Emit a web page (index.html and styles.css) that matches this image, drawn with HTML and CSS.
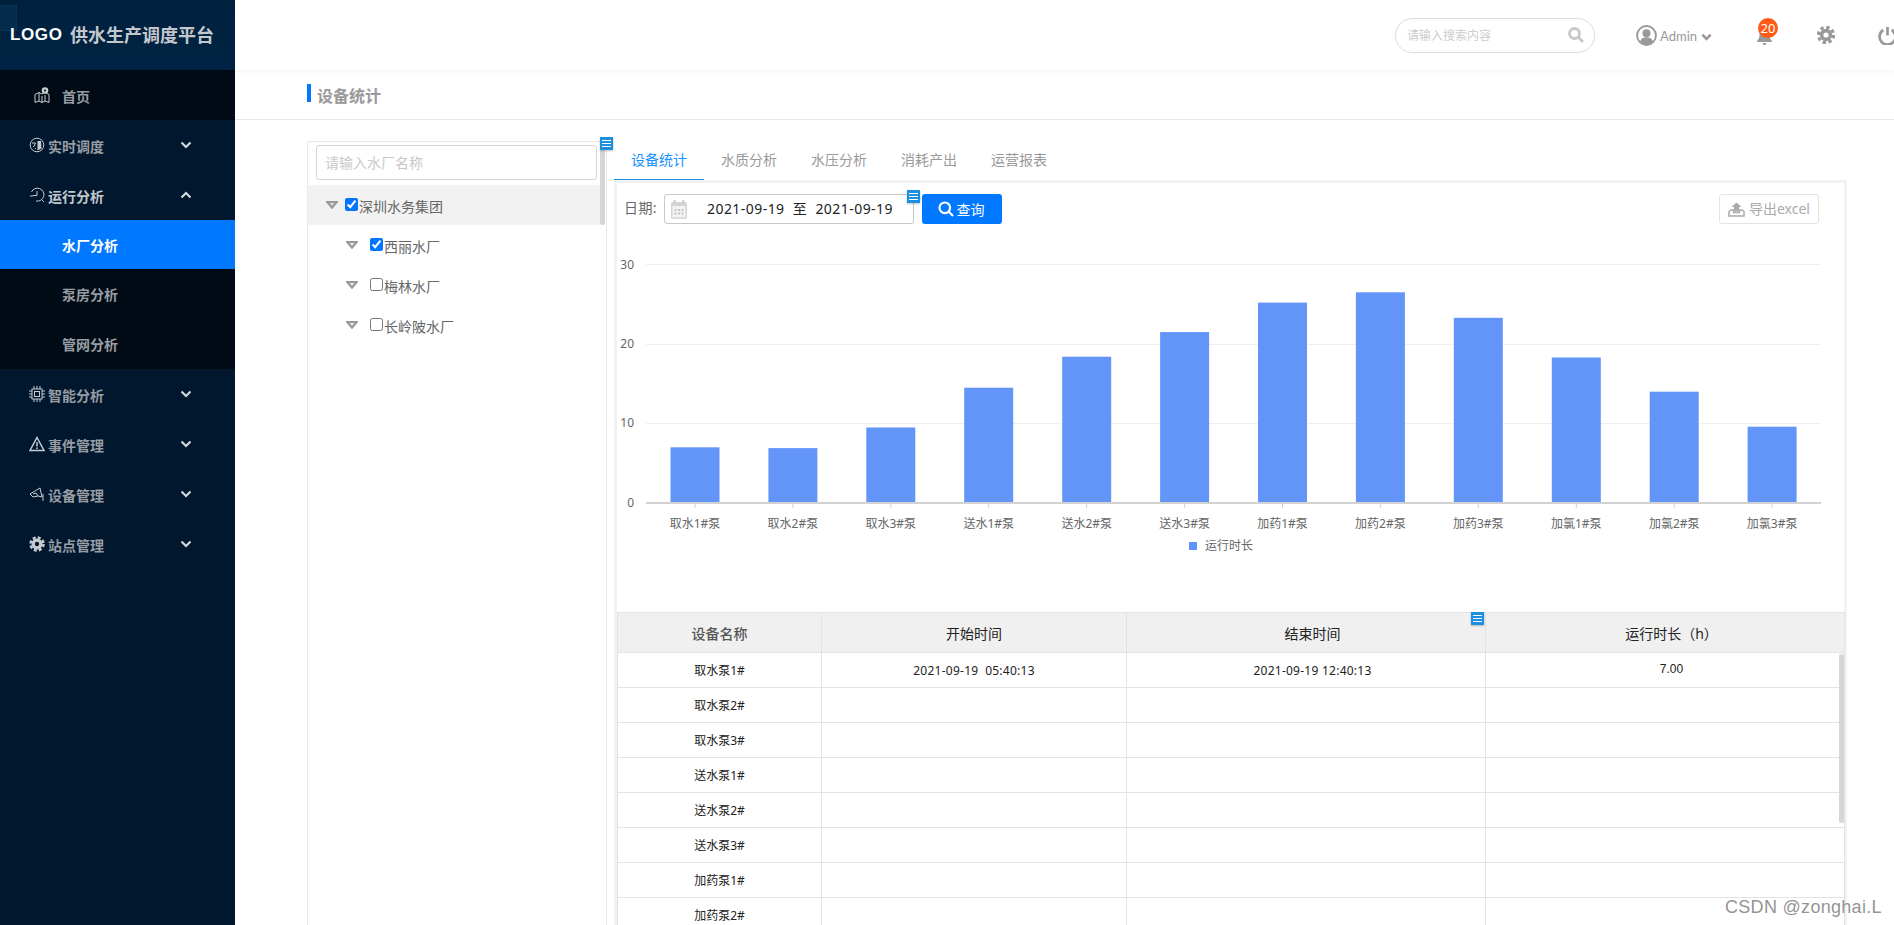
FILE: index.html
```html
<!DOCTYPE html>
<html lang="zh-CN">
<head>
<meta charset="utf-8">
<title>供水生产调度平台</title>
<link rel="stylesheet" href="styles.css">
</head>
<body>
<aside class="sidebar">
  <div class="brand"><span class="brand-ghost"></span><b class="brand-logo">LOGO</b><b class="brand-name">供水生产调度平台</b></div>
  <nav class="nav">
    <a class="nav-item nav-home">
      <svg class="nav-ic" viewBox="0 0 16 16"><path d="M1 7.500l4-2 3 1.500 3-1.500 4 2v8l-4-1.500-3 1.500-3-1.500-4 1.500z M5 5.500v8.500 M11 8v6 M8 9v6.500" class="ic-line"/><circle cx="11" cy="3.500" r="3.300" class="ic-fill"/><circle cx="11" cy="3.500" r="1" fill="#000b16"/></svg>
      <span>首页</span>
    </a>
    <a class="nav-item">
      <svg class="nav-ic" viewBox="0 0 16 16"><circle cx="8" cy="8" r="6.800" class="ic-line"/><path d="M8.500 4h3.500l.5 7.500-4 2z" class="ic-fill"/><path d="M3 6h3.500L5 9.500H4 M6 11l1 1" class="ic-line"/></svg>
      <span class="nav-text">实时调度</span>
      <svg class="chev" viewBox="0 0 12 8"><path d="M1.500 1.500L6 6l4.500-4.500"/></svg>
    </a>
    <a class="nav-item nav-open">
      <svg class="nav-ic" viewBox="0 0 16 16"><path d="M2.500 5A6.500 6.500 0 1 1 7 14 M8 4v4.500H4 M1 9h3 M12 12l3 3" class="ic-line"/></svg>
      <span class="nav-text">运行分析</span>
      <svg class="chev" viewBox="0 0 12 8"><path d="M1.500 6.500L6 2l4.500 4.500"/></svg>
    </a>
    <div class="subnav">
      <a class="sub-item sub-active">水厂分析</a>
      <a class="sub-item">泵房分析</a>
      <a class="sub-item">管网分析</a>
    </div>
    <a class="nav-item">
      <svg class="nav-ic" viewBox="0 0 16 16"><rect x="3" y="3" width="10" height="10" class="ic-line"/><rect x="5.500" y="5.500" width="5" height="5" class="ic-line"/><path d="M0 5h3M0 8h3M0 11h3M13 5h3M13 8h3M13 11h3M5 0v3M8 0v3M11 0v3M5 13v3M8 13v3M11 13v3" class="ic-line"/></svg>
      <span class="nav-text">智能分析</span>
      <svg class="chev" viewBox="0 0 12 8"><path d="M1.500 1.500L6 6l4.500-4.500"/></svg>
    </a>
    <a class="nav-item">
      <svg class="nav-ic" viewBox="0 0 16 16"><path d="M8 1.500L15 14.500H1z" class="ic-line ic-thick"/><path d="M8 6v4.500M8 11.500v1.500" class="ic-line ic-thick"/></svg>
      <span class="nav-text">事件管理</span>
      <svg class="chev" viewBox="0 0 12 8"><path d="M1.500 1.500L6 6l4.500-4.500"/></svg>
    </a>
    <a class="nav-item">
      <svg class="nav-ic" viewBox="0 0 16 16"><path d="M1 8l10-6 2 9-4-1-5 1z M4 8l3-1 2 3 M14 8v7" class="ic-line"/></svg>
      <span class="nav-text">设备管理</span>
      <svg class="chev" viewBox="0 0 12 8"><path d="M1.500 1.500L6 6l4.500-4.500"/></svg>
    </a>
    <a class="nav-item">
      <svg class="nav-ic" viewBox="0 0 16 16"><circle cx="8" cy="8" r="5.500" class="ic-fill"/><circle cx="8" cy="8" r="6.500" class="ic-teeth"/><circle cx="8" cy="8" r="2.200" fill="#00172e"/></svg>
      <span class="nav-text">站点管理</span>
      <svg class="chev" viewBox="0 0 12 8"><path d="M1.500 1.500L6 6l4.500-4.500"/></svg>
    </a>
  </nav>
</aside>

<div class="main">
  <header class="topbar">
    <div class="search">
      <span class="search-ph">请输入搜索内容</span>
      <svg class="search-ic" viewBox="0 0 16 16"><circle cx="6.500" cy="6.500" r="5"/><path d="M10.500 10.500L15 15"/></svg>
    </div>
    <div class="user">
      <svg class="user-ic" viewBox="0 0 20 20"><circle cx="10" cy="10" r="9" class="u-ring"/><circle cx="10" cy="7.800" r="3.800" class="u-fill"/><path d="M3.800 15.500c1.500-3 3.500-3.800 6.200-3.800s4.700.8 6.200 3.800c-3 3.800-9.400 3.800-12.400 0z" class="u-fill"/></svg>
      <span class="user-name">Admin</span>
      <svg class="user-chev" viewBox="0 0 12 8"><path d="M1.500 1.500L6 6l4.500-4.500"/></svg>
    </div>
    <div class="bell">
      <svg class="bell-ic" viewBox="0 0 16 18"><path d="M8 1c3.500 0 5 2.500 5 5.500 0 3.500 1 5 2.500 6.500v1H.5v-1C2 11.500 3 10 3 6.500 3 3.500 4.500 1 8 1z"/><path d="M6 15h4a2 2 0 0 1-4 0z"/></svg>
      <span class="badge">20</span>
    </div>
    <svg class="gear-ic" viewBox="0 0 16 16"><circle cx="8" cy="8" r="5.500" class="g-body"/><circle cx="8" cy="8" r="6.800" class="g-teeth"/><circle cx="8" cy="8" r="2.300" fill="#fff"/></svg>
    <svg class="power-ic" viewBox="0 0 18 18"><path d="M5 3.800a7.500 7.500 0 1 0 8 0 M9 1v8"/></svg>
  </header>

  <div class="pagehead"><span class="pagehead-bar"></span><h1 class="pagehead-title">设备统计</h1></div>

  <div class="content">
    <section class="tree">
      <div class="tree-search">请输入水厂名称</div>
      <span class="tree-scroll"></span>
      <span class="note note-tree"><i></i><i></i><i></i></span>
      <div class="tree-row tree-row-on">
        <svg class="tri" viewBox="0 0 12 8"><path d="M1.500 1.200h9L6 6.500z"/></svg>
        <input class="chk" type="checkbox" checked>
        <span class="tree-label">深圳水务集团</span>
      </div>
      <div class="tree-row tree-child">
        <svg class="tri" viewBox="0 0 12 8"><path d="M1.500 1.200h9L6 6.500z"/></svg>
        <input class="chk" type="checkbox" checked>
        <span class="tree-label">西丽水厂</span>
      </div>
      <div class="tree-row tree-child">
        <svg class="tri" viewBox="0 0 12 8"><path d="M1.500 1.200h9L6 6.500z"/></svg>
        <input class="chk" type="checkbox">
        <span class="tree-label">梅林水厂</span>
      </div>
      <div class="tree-row tree-child">
        <svg class="tri" viewBox="0 0 12 8"><path d="M1.500 1.200h9L6 6.500z"/></svg>
        <input class="chk" type="checkbox">
        <span class="tree-label">长岭陂水厂</span>
      </div>
    </section>

    <section class="panel">
      <div class="tabs">
        <a class="tab tab-on">设备统计</a>
        <a class="tab">水质分析</a>
        <a class="tab">水压分析</a>
        <a class="tab">消耗产出</a>
        <a class="tab">运营报表</a>
      </div>
      <div class="box">
        <div class="toolbar">
          <label class="date-label">日期:</label>
          <div class="date">
            <svg class="cal" viewBox="0 0 16 19"><path d="M0 4a2 2 0 0 1 2-2h12a2 2 0 0 1 2 2v13a2 2 0 0 1-2 2H2a2 2 0 0 1-2-2z" fill="#d4d4d4"/><rect x="2.500" y="0" width="2.500" height="4" fill="#d4d4d4"/><rect x="11" y="0" width="2.500" height="4" fill="#d4d4d4"/><rect x="1.500" y="6" width="13" height="11.500" fill="#f2f2f2"/><path d="M3.500 9h2v2h-2zM7 9h2v2H7zM10.500 9h2v2h-2zM3.500 12.500h2v2h-2zM7 12.500h2v2H7zM10.500 12.500h2v2h-2z" fill="#c4c4c4"/></svg>
            <span class="date-text">2021-09-19&nbsp; 至 &nbsp;2021-09-19</span>
            <span class="note note-date"><i></i><i></i><i></i></span>
          </div>
          <button class="btn-query"><svg class="q-ic" viewBox="0 0 16 16"><circle cx="6.800" cy="6.800" r="5.300"/><path d="M10.800 10.800L15 15"/></svg>查询</button>
          <button class="btn-export"><svg class="x-ic" viewBox="0 0 17 15"><path d="M1 9.500L3 8h2.500v2.500h6V8H14l2 1.500v4.500H1z" class="x-line"/><path d="M8.500 .5L13.500 5H11v4.500H6V5H3.500z" class="x-fill"/></svg>导出excel</button>
        </div>

        <svg class="chart" viewBox="0 0 1227 388" width="1227" height="388">
          <g class="grid">
            <line x1="29" x2="1204" y1="40.500" y2="40.500"/>
            <line x1="29" x2="1204" y1="120.500" y2="120.500"/>
            <line x1="29" x2="1204" y1="199.500" y2="199.500"/>
          </g>
          <g class="ylab">
            <text x="17" y="45">30</text>
            <text x="17" y="124">20</text>
            <text x="17" y="203">10</text>
            <text x="17" y="283">0</text>
          </g>
          <g class="bars">
            <rect x="53.500" y="223.300" width="49" height="55.700"/>
            <rect x="151.400" y="224.100" width="49" height="54.900"/>
            <rect x="249.300" y="203.500" width="49" height="75.500"/>
            <rect x="347.200" y="163.700" width="49" height="115.300"/>
            <rect x="445.200" y="132.700" width="49" height="146.300"/>
            <rect x="543.100" y="108.100" width="49" height="170.900"/>
            <rect x="641" y="78.600" width="49" height="200.400"/>
            <rect x="738.900" y="68.300" width="49" height="210.700"/>
            <rect x="836.800" y="93.800" width="49" height="185.200"/>
            <rect x="934.800" y="133.500" width="49" height="145.500"/>
            <rect x="1032.700" y="167.700" width="49" height="111.300"/>
            <rect x="1130.600" y="202.700" width="49" height="76.300"/>
          </g>
          <line class="axis" x1="29" x2="1204" y1="279" y2="279"/>
          <g class="ticks">
            <line x1="78" x2="78" y1="280" y2="284"/><line x1="175.900" x2="175.900" y1="280" y2="284"/><line x1="273.800" x2="273.800" y1="280" y2="284"/><line x1="371.700" x2="371.700" y1="280" y2="284"/><line x1="469.700" x2="469.700" y1="280" y2="284"/><line x1="567.600" x2="567.600" y1="280" y2="284"/><line x1="665.500" x2="665.500" y1="280" y2="284"/><line x1="763.400" x2="763.400" y1="280" y2="284"/><line x1="861.300" x2="861.300" y1="280" y2="284"/><line x1="959.300" x2="959.300" y1="280" y2="284"/><line x1="1057.200" x2="1057.200" y1="280" y2="284"/><line x1="1155.100" x2="1155.100" y1="280" y2="284"/>
          </g>
          <g class="xlab">
            <text x="78" y="304">取水1#泵</text>
            <text x="175.900" y="304">取水2#泵</text>
            <text x="273.800" y="304">取水3#泵</text>
            <text x="371.700" y="304">送水1#泵</text>
            <text x="469.700" y="304">送水2#泵</text>
            <text x="567.600" y="304">送水3#泵</text>
            <text x="665.500" y="304">加药1#泵</text>
            <text x="763.400" y="304">加药2#泵</text>
            <text x="861.300" y="304">加药3#泵</text>
            <text x="959.300" y="304">加氯1#泵</text>
            <text x="1057.200" y="304">加氯2#泵</text>
            <text x="1155.100" y="304">加氯3#泵</text>
          </g>
          <rect class="legend-mark" x="572" y="318" width="8" height="8"/>
          <text class="legend-text" x="588" y="326">运行时长</text>
        </svg>

        <div class="table-wrap">
          <span class="note note-table"><i></i><i></i><i></i></span>
          <span class="table-scroll"></span>
          <table class="table">
            <colgroup><col class="c1"><col class="c2"><col class="c3"><col class="c4"></colgroup>
            <thead>
              <tr><th class="th-first">设备名称</th><th>开始时间</th><th class="shift">结束时间</th><th class="shift">运行时长（h）</th></tr>
            </thead>
            <tbody>
              <tr><td>取水泵1#</td><td class="stamp">2021-09-19&nbsp; 05:40:13</td><td class="shift stamp">2021-09-19 12:40:13</td><td class="shift val">7.00</td></tr>
              <tr><td>取水泵2#</td><td></td><td></td><td></td></tr>
              <tr><td>取水泵3#</td><td></td><td></td><td></td></tr>
              <tr><td>送水泵1#</td><td></td><td></td><td></td></tr>
              <tr><td>送水泵2#</td><td></td><td></td><td></td></tr>
              <tr><td>送水泵3#</td><td></td><td></td><td></td></tr>
              <tr><td>加药泵1#</td><td></td><td></td><td></td></tr>
              <tr><td>加药泵2#</td><td></td><td></td><td></td></tr>
            </tbody>
          </table>
        </div>
      </div>
    </section>
  </div>
</div>
<div class="watermark">CSDN @zonghai.L</div>
</body>
</html>
```
FILE: styles.css
```css
* { box-sizing: border-box; }
html, body { margin: 0; height: 925px; overflow: hidden; }
body {
  display: flex;
  background: #fff;
  font-family: "Noto Sans", "Noto Sans CJK SC", sans-serif;
  font-size: 14px;
  color: #666;
}
a { display: block; }

/* sidebar */
.sidebar { width: 235px; height: 925px; flex: none; background: #00172e; }
.brand {
  position: relative;
  height: 70px;
  background: linear-gradient(180deg, #00203e, #002444);
  display: flex;
  align-items: center;
  padding: 0 0 1px 10px;
  overflow: hidden;
}
.brand-ghost {
  position: absolute; left: -6px; top: 5px; width: 23px; height: 26px;
  border: 1px solid #0a3354; background: #032b4c;
}
.brand-logo { position: relative; font: bold 17px/20px "Liberation Sans", sans-serif; letter-spacing: .6px; color: #fff; width: 60px; margin-top: 1px; }
.brand-name { font: bold 18px/24px "Noto Sans CJK SC", sans-serif; color: #c4c8cc; margin-top: -1px; }

.nav-item {
  height: 50px;
  display: flex;
  align-items: center;
  padding-left: 29px;
  color: #989da3;
  font-weight: bold;
  line-height: 20px;
}
.nav-home { background: #000b16; padding-left: 34px; }
.nav-home span { margin-left: 12px; padding-top: 3px; }
.nav-open { color: #c3c8cd; }
.nav-ic { width: 16px; height: 16px; flex: none; }
.ic-line { fill: none; stroke: #c6cbd0; stroke-width: 1; }
.ic-thick { stroke-width: 1.500; }
.ic-fill { fill: #c6cbd0; }
.ic-teeth { fill: none; stroke: #c6cbd0; stroke-width: 2.500; stroke-dasharray: 3 2.100; }
.nav-text { margin-left: 3px; width: 132px; padding-top: 3px; }
.chev { width: 12px; height: 8px; flex: none; }
.chev path { fill: none; stroke: #d3d8dc; stroke-width: 2.200; }
.subnav { background: #000b16; }
.sub-item { height: 50px; padding-left: 62px; line-height: 51px; color: #989da3; font-weight: bold; }
.sub-active { height: 49px; background: #0078ff; color: #fff; }

/* main */
.main { width: 1659px; flex: none; }
.topbar {
  height: 70px;
  position: relative;
  display: flex;
  align-items: center;
  padding-left: 1160px;
  box-shadow: 0 1px 5px rgba(0, 0, 0, .05);
}
.search {
  width: 200px; height: 35px; flex: none;
  border: 1px solid #ddd;
  border-radius: 18px;
  display: flex; align-items: center; justify-content: space-between;
  padding: 0 10px 0 11px;
}
.search-ph { font-size: 12px; line-height: 16px; color: #ccc; padding-top: 2px; }
.search-ic { width: 16px; height: 16px; }
.search-ic circle, .search-ic path { fill: none; stroke: #c8c8c8; stroke-width: 2.800; }
.user { display: flex; align-items: center; margin-left: 41px; flex: none; }
.user-ic { width: 21px; height: 21px; }
.u-ring { fill: none; stroke: #999; stroke-width: 1.800; }
.u-fill { fill: #999; }
.user-name { font: 13px/16px Lato, sans-serif; color: #999; margin-left: 3px; padding-top: 2px; }
.user-chev { width: 11px; height: 8px; margin: 3px 0 0 4px; }
.user-chev path { fill: none; stroke: #999; stroke-width: 2.800; }
.bell { position: relative; width: 17px; height: 18px; margin: 3px 0 0 44px; flex: none; }
.bell-ic { width: 17px; height: 18px; display: block; fill: #999; }
.badge {
  position: absolute; left: 2px; top: -10px;
  width: 20px; height: 20px; border-radius: 50%;
  background: #ff5a14; color: #fff;
  font-size: 13px; line-height: 20px; text-align: center;
}
.gear-ic { width: 18px; height: 18px; margin-left: 44px; flex: none; }
.g-body { fill: #999; }
.g-teeth { fill: none; stroke: #999; stroke-width: 2.800; stroke-dasharray: 3 2.340; }
.power-ic { width: 19px; height: 19px; margin-left: 43px; flex: none; }
.power-ic path { fill: none; stroke: #999; stroke-width: 2.600; }

.pagehead {
  height: 50px;
  display: flex;
  align-items: center;
  padding: 0 0 0 72px;
  border-bottom: 1px solid #e8e8e8;
}
.pagehead-bar { width: 4px; height: 18px; background: #0078ff; margin-top: -4px; }
.pagehead-title { margin: 3px 0 0 6px; font-size: 16px; line-height: 22px; font-weight: bold; color: #999; }

.content { display: flex; align-items: flex-start; padding: 21px 0 0 72px; height: 805px; }

/* tree */
.tree {
  position: relative;
  width: 300px;
  height: 784px;
  border: 1px solid #e8e8e8;
  border-bottom: 0;
  flex: none;
  padding-top: 43px;
}
.tree-search {
  position: absolute; left: 8px; top: 3px;
  width: 281px; height: 35px;
  border: 1px solid #d5d5d5; border-radius: 3px;
  padding-left: 8px;
  color: #c8c8c8; font-size: 14px; line-height: 34px;
}
.tree-scroll { position: absolute; left: 292px; top: 3px; width: 5px; height: 80px; background: #d6d6d6; border-radius: 0 0 2px 2px; }
.tree-row {
  width: 292px; height: 40px;
  display: flex; align-items: center;
  padding-left: 18px;
  color: #666;
  line-height: 20px;
}
.tree-label { padding-top: 3px; }
.tree-row-on { background: #f2f2f2; }
.tree-child { padding-left: 38px; }
.tri { width: 12px; height: 8px; flex: none; }
.tri path { fill: #fff; stroke: #999; stroke-width: 2.300; }
.tree-row-on .tri path { fill: #f2f2f2; }
.chk { width: 13px; height: 13px; margin: 0 1px 2px 7px; flex: none; }
.tree-child .chk { margin-left: 12px; }

.note {
  position: absolute;
  width: 13px; height: 13px;
  background: #1b8fe0;
  box-shadow: 0 1px 2px rgba(0, 0, 0, .25);
  display: flex; flex-direction: column; justify-content: center; gap: 2px;
  padding: 0 2px;
  z-index: 2;
}
.note i { display: block; height: 1px; background: #fff; }
.note-tree { left: 292px; top: -5px; }
.note-date { right: -7px; top: -5px; }
.note-table { left: 854px; top: 0; }

/* right panel */
.panel { width: 1233px; margin-left: 7px; flex: none; }
.tabs { display: flex; height: 39px; }
.tab { width: 90px; height: 39px; text-align: center; line-height: 38px; color: #999; }
.tab-on { color: #1890ff; border-bottom: 1px solid #1890e8; }
.box { border: 3px solid #f2f2f2; border-bottom: 0; height: 745px; }
.toolbar { display: flex; padding: 11px 0 0 7px; height: 41px; position: relative; }
.date-label { width: 40px; line-height: 28px; color: #666; letter-spacing: .4px; }
.date {
  position: relative; width: 250px; height: 30px;
  border: 1px solid #c8c8c8; border-radius: 3px;
  display: flex; align-items: center;
}
.cal { width: 16px; height: 19px; margin-left: 6px; flex: none; }
.date-text { margin-left: 20px; color: #222; letter-spacing: .45px; line-height: 20px; white-space: nowrap; }
.btn-query {
  width: 80px; height: 30px; margin-left: 8px;
  border: 0; border-radius: 3px; background: #0078ff; color: #fff;
  font: 14px/20px "Noto Sans CJK SC", sans-serif;
  display: flex; align-items: center; justify-content: center; padding: 0 2px 0 0;
}
.q-ic { width: 16px; height: 16px; margin-right: 3px; }
.q-ic circle, .q-ic path { fill: none; stroke: #fff; stroke-width: 2.200; }
.btn-export {
  position: absolute; left: 1102px; top: 11px;
  width: 100px; height: 30px;
  border: 1px solid #e3e3e3; border-radius: 3px; background: #fff; color: #aaa;
  font: 14px/20px "Noto Sans", "Noto Sans CJK SC", sans-serif;
  display: flex; align-items: center; justify-content: center; padding: 0;
}
.x-ic { width: 17px; height: 15px; margin-right: 4px; }
.x-line { fill: #fff; stroke: #aaa; stroke-width: 1.500; }
.x-fill { fill: #aaa; }

.chart { display: block; }
.grid line { stroke: #efefef; stroke-width: 1; }
.axis { stroke: #d2d2d2; stroke-width: 2; }
.ticks line { stroke: #d2d2d2; stroke-width: 1; }
.bars rect { fill: #6395f9; }
.ylab text { font-size: 12px; fill: #666; text-anchor: end; }
.xlab text { font-size: 12px; fill: #666; text-anchor: middle; }
.legend-mark { fill: #6395f9; }
.legend-text { font-size: 12px; fill: #666; }

/* table */
.table-wrap { position: relative; width: 1227px; }
.table { width: 1227px; table-layout: fixed; border-collapse: collapse; }
.c1 { width: 204px; }
.c2 { width: 305px; }
.c3 { width: 359px; }
.c4 { width: 359px; }
.table th {
  height: 40px; padding: 2px 0 0;
  background: #f0f0f0;
  border: 1px solid #e3e3e3;
  font-weight: normal; font-size: 14px; line-height: 20px; color: #222;
}
.table .th-first { color: #555; font-weight: 500; }
.table td {
  height: 35px; padding: 1px 0 0;
  border: 1px solid #e3e3e3;
  text-align: center;
  font-size: 12px; line-height: 16px; color: #222;
}
.table .stamp { letter-spacing: .25px; }
.table .shift { padding-left: 13px; }
.table .val { padding-bottom: 4px; font-family: "Liberation Sans", sans-serif; }
.table-scroll { position: absolute; right: 0; top: 42px; width: 5px; height: 169px; background: #d6d6d6; border-radius: 2px; z-index: 1; }

.watermark {
  position: absolute; left: 1725px; top: 895px;
  font: 18px/24px "Liberation Sans", sans-serif;
  color: rgba(110, 110, 110, .75);
  letter-spacing: .3px;
  white-space: nowrap;
}
```
